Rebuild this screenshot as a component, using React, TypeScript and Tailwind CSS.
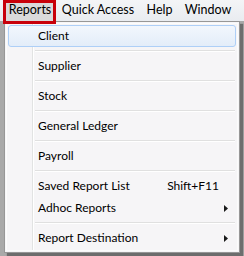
import { ReactNode } from "react";

const font = { fontFamily: 'Lato, "Noto Sans", sans-serif' };

function Arrow() {
  return (
    <svg width="4" height="7" viewBox="0 0 4 7" className="block">
      <path d="M0 0 L4 3.5 L0 7 Z" fill="#1a1a1a" />
    </svg>
  );
}

function Item({
  label,
  shortcut,
  submenu,
  active,
}: {
  label: string;
  shortcut?: string;
  submenu?: boolean;
  active?: boolean;
}) {
  return (
    <div
      className={
        "relative flex h-[22px] items-center pr-[8px] " +
        (active
          ? "rounded-[3px] border border-[#aecff7] bg-gradient-to-b from-[#f2f7fd] to-[#e3edf9] pl-[29px]"
          : "pl-[30px]")
      }
    >
      <span className="flex-1 text-[12px] text-black">{label}</span>
      {shortcut && <span className="mr-[9px] text-[12px] text-black">{shortcut}</span>}
      {submenu && <Arrow />}
    </div>
  );
}

function Sep() {
  return (
    <div className="flex h-[8px] flex-col justify-center pl-[27px] pr-[1px]">
      <div className="h-px bg-[#e0e0e0]" />
      <div className="h-px bg-white" />
    </div>
  );
}

function Top({ children, w }: { children: ReactNode; w: string }) {
  return <div className={"flex h-full items-center justify-center text-[12.5px] text-black " + w}>{children}</div>;
}

export default function App() {
  return (
    <div className="relative h-[256px] w-[244px] overflow-hidden bg-[#a9a9a9]" style={font}>
      <div className="flex h-[21px] items-center bg-gradient-to-b from-[#f4f5f7] to-[#e9ecf0] pl-[4px]">
        <Top w="w-[52px] bg-[#dadada]">Reports</Top>
        <Top w="w-[84px]">Quick Access</Top>
        <Top w="w-[39px]">Help</Top>
        <Top w="w-[58px]">Window</Top>
      </div>

      {/* dropdown */}
      <div className="absolute left-[4px] top-[21px] w-[236px] border border-[#979797] bg-[#f6f5f7] p-[1px] shadow-[3px_3px_1px_rgba(60,60,60,0.55)]">
        <div className="relative border border-[#fcfcfc] p-[1px]">
          <div className="absolute bottom-0 left-[25px] top-0 flex">
            <div className="w-px bg-[#e2e3e3]" />
            <div className="w-px bg-white" />
          </div>
          <Item label="Client" active />
          <Sep />
          <Item label="Supplier" />
          <Sep />
          <Item label="Stock" />
          <Sep />
          <Item label="General Ledger" />
          <Sep />
          <Item label="Payroll" />
          <Sep />
          <Item label="Saved Report List" shortcut="Shift+F11" />
          <Item label="Adhoc Reports" submenu />
          <Sep />
          <Item label="Report Destination" submenu />
        </div>
      </div>

      {/* red annotation box */}
      <div className="absolute left-[3px] top-0 h-[24px] w-[53px] border-[3px] border-[#c8000a]" />
    </div>
  );
}
